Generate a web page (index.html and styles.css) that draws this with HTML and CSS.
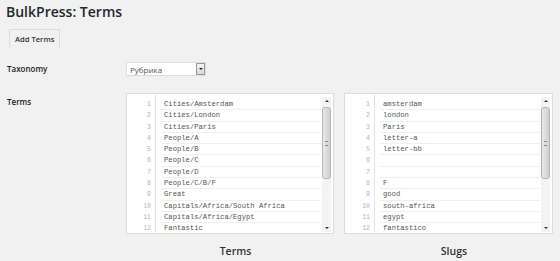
FILE: index.html
```html
<!DOCTYPE html>
<html lang="en">
<head>
    <meta charset="utf-8">
    <title>BulkPress: Terms</title>
    <link rel="stylesheet" href="styles.css">
</head>
<body>
    <div class="wrap">
        <h1>BulkPress: Terms</h1>

        <div class="tabs">
            <span class="tab">Add Terms</span>
        </div>

        <div class="form">
            <div class="lbl">Taxonomy</div>
            <div class="fld">
                <div class="sel">
                    <span class="sv">Рубрика</span>
                    <span class="sb"></span>
                </div>
            </div>

            <div class="lbl lt">Terms</div>
            <div class="fld">
                <div class="eds">
                    <div class="col">
                        <div class="ed">
                            <div class="gut">
                                <div>1</div><div>2</div><div>3</div><div>4</div><div>5</div><div>6</div>
                                <div>7</div><div>8</div><div>9</div><div>10</div><div>11</div><div>12</div>
                            </div>
                            <div class="lines">
                                <div>Cities/Amsterdam</div>
                                <div>Cities/London</div>
                                <div>Cities/Paris</div>
                                <div>People/A</div>
                                <div>People/B</div>
                                <div>People/C</div>
                                <div>People/D</div>
                                <div>People/C/B/F</div>
                                <div>Great</div>
                                <div>Capitals/Africa/South Africa</div>
                                <div>Capitals/Africa/Egypt</div>
                                <div>Fantastic</div>
                            </div>
                            <div class="sc">
                                <span class="up"></span>
                                <span class="th"><i></i></span>
                                <span class="dn"></span>
                            </div>
                        </div>
                        <div class="cap">Terms</div>
                    </div>

                    <div class="col">
                        <div class="ed ed2">
                            <div class="gut">
                                <div>1</div><div>2</div><div>3</div><div>4</div><div>5</div><div>6</div>
                                <div>7</div><div>8</div><div>9</div><div>10</div><div>11</div><div>12</div>
                            </div>
                            <div class="lines">
                                <div>amsterdam</div>
                                <div>london</div>
                                <div>Paris</div>
                                <div>letter-a</div>
                                <div>letter-bb</div>
                                <div></div>
                                <div></div>
                                <div>F</div>
                                <div>good</div>
                                <div>south-africa</div>
                                <div>egypt</div>
                                <div>fantastico</div>
                            </div>
                            <div class="sc">
                                <span class="up"></span>
                                <span class="th"><i></i></span>
                                <span class="dn"></span>
                            </div>
                        </div>
                        <div class="cap">Slugs</div>
                    </div>
                </div>
            </div>
        </div>
    </div>
</body>
</html>
```

FILE: styles.css
```css
/* Base */
html, body {
    margin: 0;
    padding: 0;
    background-color: #f1f1f1;
    font-family: "Open Sans", "Liberation Sans", sans-serif;
    color: #333;
}

.wrap {
    padding: 0 8px 0 6px;
}

h1 {
    margin: 0;
    padding-top: 2px;
    font-size: 14px;
    line-height: 20px;
    font-weight: 600;
    color: #23282d;
}

/* Tabs */
.tabs {
    margin: 3px 0 0 3px;
    height: 19px;
}

.tab {
    display: inline-block;
    height: 19px;
    line-height: 19px;
    padding: 0 5px;
    border: 1px solid #dcdcdc;
    border-bottom: none;
    box-sizing: border-box;
    font-size: 7.6px;
    font-weight: 600;
    color: #333;
}

/* Form */
.form {
    display: grid;
    grid-template-columns: 120px 1fr;
    row-gap: 17px;
    margin-top: 18px;
}

.lbl {
    padding-left: 1px;
    font-size: 8px;
    font-weight: 600;
    line-height: 14px;
    color: #222;
}

.lbl.lt {
    padding-top: 2px;
}

.sel {
    display: flex;
    align-items: center;
    width: 80px;
    height: 14px;
    box-sizing: border-box;
    border: 1px solid #ddd;
    background: #fff;
}

.sv {
    flex: 1;
    padding-left: 3px;
    font-size: 8px;
    color: #555;
}

.sb {
    position: relative;
    width: 9px;
    height: 12px;
    box-sizing: border-box;
    border: 1px solid #999;
    background: linear-gradient(#f4f4f4, #d8d8d8);
}

.sb::after {
    content: "";
    position: absolute;
    left: 2px;
    top: 4px;
    border-left: 2px solid transparent;
    border-right: 2px solid transparent;
    border-top: 2px solid #222;
}

/* Editors */
.eds {
    display: flex;
    gap: 10px;
}

.col {
    width: 208px;
}

.col + .col {
    width: 209px;
}

.ed {
    display: flex;
    height: 141px;
    box-sizing: border-box;
    padding-bottom: 1px;
    border: 1px solid #dcdcdc;
    background: #fff;
    overflow: hidden;
}

.gut {
    width: 28px;
    flex: none;
    padding-top: 5px;
    overflow: hidden;
    border-right: 1px solid #e2e2e2;
    text-align: right;
    font-family: "Liberation Mono", monospace;
    font-size: 6.5px;
    color: #b4b4b4;
}

.ed2 .gut {
    width: 29px;
}

.gut div {
    height: 11.3px;
    line-height: 11.3px;
    padding-right: 4px;
}

.lines {
    flex: 1;
    padding: 5px 1px 0 5px;
    overflow: hidden;
    font-family: "Liberation Mono", "Courier New", monospace;
    font-size: 7.2px;
    color: #555;
}

.lines div {
    height: 11.3px;
    line-height: 11px;
    padding-left: 3px;
    box-sizing: border-box;
    border-bottom: 1px solid #f0f0f0;
    white-space: pre;
}

/* Scrollbar */
.sc {
    display: flex;
    flex-direction: column;
    align-items: center;
    width: 9px;
    flex: none;
    margin: 3px 2px 0 0;
    background: #f3f3f3;
}

.up, .dn {
    width: 0;
    height: 0;
    margin-top: 3px;
    border-left: 2px solid transparent;
    border-right: 2px solid transparent;
}

.up {
    border-bottom: 2px solid #333;
}

.dn {
    margin-top: auto;
    margin-bottom: 3px;
    border-top: 2px solid #333;
}

.th {
    display: flex;
    align-items: center;
    justify-content: center;
    width: 9px;
    height: 72px;
    margin-top: 5px;
    box-sizing: border-box;
    border: 1px solid #b5b5b5;
    border-radius: 3px;
    background: linear-gradient(90deg, #e8e8e8, #cfcfcf);
}

.th i {
    width: 3px;
    height: 3px;
    border-top: 1px solid #888;
    border-bottom: 1px solid #888;
}

.cap {
    margin-top: 10px;
    padding-left: 11px;
    text-align: center;
    font-size: 10.5px;
    line-height: 14px;
    font-weight: 600;
    color: #333;
}
```
